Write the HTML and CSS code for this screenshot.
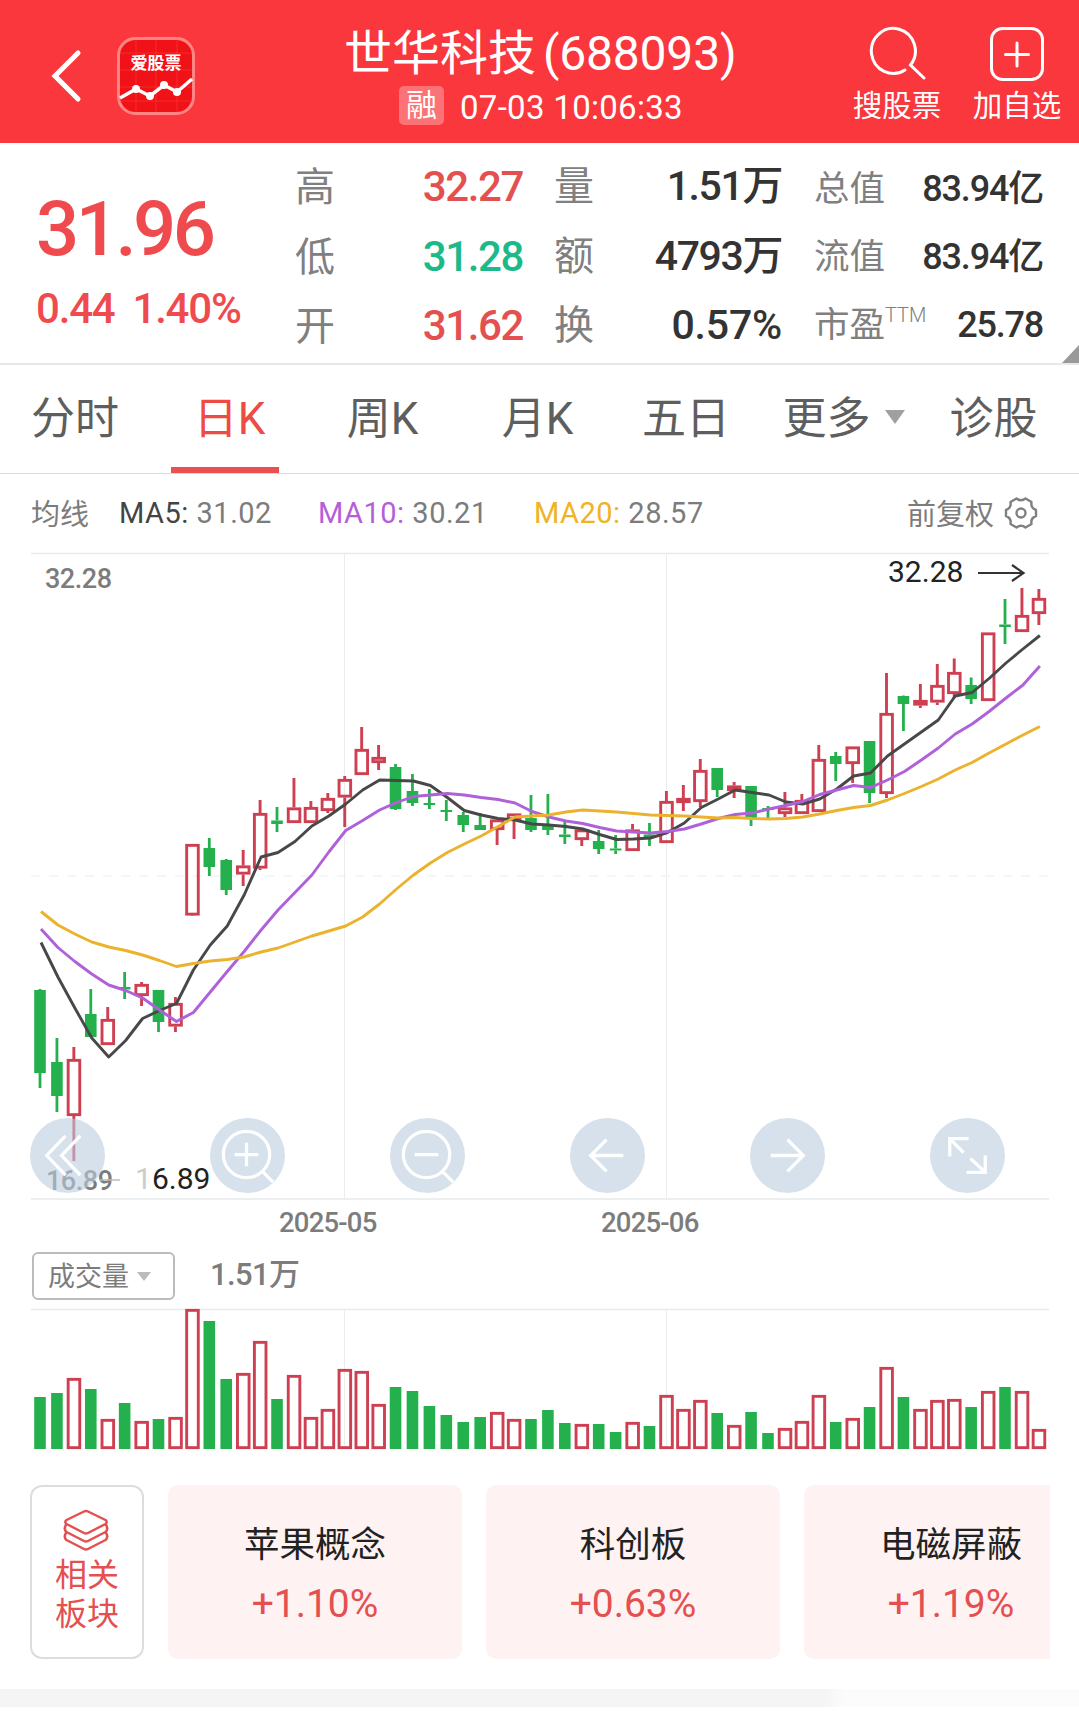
FILE: index.html
```html
<!DOCTYPE html>
<html lang="zh-CN">
<head>
  <meta charset="UTF-8">
  <meta name="viewport" content="width=device-width, initial-scale=1.0">
  <title>世华科技(688093)</title>
  <link rel="stylesheet" href="styles.css">
</head>
<body>
  <header class="header">
    <svg class="back" width="32" height="56" viewBox="0 0 32 56"><path d="M28 5 L5 28 L28 51" fill="none" stroke="#fff" stroke-width="5" stroke-linecap="round"/></svg>
    <svg class="logo" width="78" height="78" viewBox="0 0 78 78">
      <rect x="1.5" y="1.5" width="75" height="75" rx="17" fill="#f01216" stroke="#ff8585" stroke-width="3"/>
      <path d="M3 16H75M3 33H75M3 50H75M3 64H75M19 3V75M39 3V75M60 3V75" stroke="#ff4444" stroke-width="1" opacity=".5"/>
      <text x="39" y="32" text-anchor="middle" class="logo-text">爱股票</text>
      <path d="M3 61 L19 52 L33 59 L47 48 L60 55 L75 42" fill="none" stroke="#fff" stroke-width="3.5"/>
      <g fill="#fff"><circle cx="19" cy="52" r="4"/><circle cx="33" cy="59" r="4"/><circle cx="47" cy="48" r="4"/><circle cx="60" cy="55" r="4"/></g>
    </svg>
    <div class="title">
      <h1>世华科技<span>(688093)</span></h1>
      <div class="subtitle"><span class="badge">融</span><span class="time">07-03 10:06:33</span></div>
    </div>
    <div class="action">
      <svg width="58" height="58" viewBox="0 0 58 58" fill="none" stroke="#fff" stroke-width="3" stroke-linecap="round"><path d="M37 45 A22 22.5 0 1 1 42.500 40 L56 53"/></svg>
      <span>搜股票</span>
    </div>
    <div class="action">
      <svg width="58" height="58" viewBox="0 0 58 58" fill="none" stroke="#fff" stroke-width="3" stroke-linecap="round"><rect x="3.500" y="3.500" width="51" height="51" rx="11"/><path d="M29 18V41M17.500 29.500H40.500"/></svg>
      <span>加自选</span>
    </div>
  </header>

  <section class="quote">
    <div class="price">
      <div class="last">31.96</div>
      <div class="change"><span>0.44</span><span>1.40%</span></div>
    </div>
    <dl class="stats first">
      <div><dt>高</dt><dd class="up">32.27</dd></div>
      <div><dt>低</dt><dd class="down">31.28</dd></div>
      <div><dt>开</dt><dd class="up">31.62</dd></div>
    </dl>
    <dl class="stats second">
      <div><dt>量</dt><dd>1.51万</dd></div>
      <div><dt>额</dt><dd>4793万</dd></div>
      <div><dt>换</dt><dd class="turnover">0.57%</dd></div>
    </dl>
    <dl class="stats third">
      <div><dt>总值</dt><dd>83.94亿</dd></div>
      <div><dt>流值</dt><dd>83.94亿</dd></div>
      <div><dt>市盈<sup>TTM</sup></dt><dd>25.78</dd></div>
    </dl>
    <i class="corner"></i>
  </section>

  <nav class="tabs">
    <a>分时</a>
    <a class="active">日K</a>
    <a>周K</a>
    <a>月K</a>
    <a>五日</a>
    <a>更多<i class="caret"></i></a>
    <a>诊股</a>
  </nav>

  <div class="ma">
    <span class="ma-name">均线</span>
    <span class="ma5"><b>MA5:</b> 31.02</span>
    <span class="ma10"><b>MA10:</b> 30.21</span>
    <span class="ma20"><b>MA20:</b> 28.57</span>
    <span class="adjust">前复权</span>
    <svg width="34" height="34" viewBox="0 0 34 34" fill="none" stroke="#808080" stroke-width="2.4" stroke-linejoin="round">
      <path d="M12.5 2.5 Q17 6 21.5 2.5 L27.5 6 Q26.5 12 32 14 V20 Q26.5 22 27.5 28 L21.5 31.5 Q17 28 12.5 31.5 L6.5 28 Q7.5 22 2 20 V14 Q7.5 12 6.5 6 Z"/>
      <circle cx="17" cy="17" r="4.500"/>
    </svg>
  </div>

  <div class="kline">
    <svg id="kline" width="1079" height="648" viewBox="0 552 1079 648">
      <g class="grid">
        <path d="M31 553.5H1049M31 1199H1049"/>
        <path class="faint" d="M344.500 554V1199M666.500 554V1199"/>
        <path class="faint" d="M31 876H1049" stroke-dasharray="9 9"/>
      </g>
      <text x="45" y="587.500" class="axis" textLength="67">32.28</text>
      <text x="46" y="1190" class="axis" textLength="67">16.89</text>
      <path d="M100 1180H120" class="low-line"/>
      <text x="135" y="1189" class="mark"><tspan class="faded">1</tspan>6.89</text>
      <text x="888" y="581.500" class="mark">32.28</text>
      <path d="M978 573H1023M1012 565L1023.500 573L1012 581" class="high-arrow"/>
      <g id="candles"></g>
    </svg>
    <div class="tools">
      <svg viewBox="0 0 76 76"><path d="M36 18L17 38L36 58M51 18L32 38L51 58"/></svg>
      <svg viewBox="0 0 76 76"><circle cx="37" cy="37" r="23.500"/><path d="M37 25V49M25 37H49M53 54L64 65"/></svg>
      <svg viewBox="0 0 76 76"><circle cx="37" cy="37" r="23.500"/><path d="M25 37H49M53 54L64 65"/></svg>
      <svg viewBox="0 0 76 76"><path d="M54 38H21M37 22L21 38L37 54"/></svg>
      <svg viewBox="0 0 76 76"><path d="M21 38H54M38 22L54 38L38 54"/></svg>
      <svg viewBox="0 0 76 76"><path d="M20 39V21H39M20 21L34 35M56 38V55H37M56 55L41 41"/></svg>
    </div>
  </div>

  <div class="dates"><span>2025-05</span><span>2025-06</span></div>

  <div class="volume-bar">
    <div class="select">成交量<i class="caret"></i></div>
    <span>1.51万</span>
  </div>
  <svg id="volume" class="volume" width="1079" height="142" viewBox="0 1308 1079 142">
    <g class="grid">
      <path d="M31 1309.500H1049"/>
      <path class="faint" d="M344.500 1310V1449M666.500 1310V1449"/>
    </g>
    <g id="bars"></g>
  </svg>

  <div class="sectors">
    <div class="related">
      <svg width="46" height="42" viewBox="0 0 46 42" fill="none" stroke="#e4504f" stroke-width="2.500" stroke-linejoin="round"><path d="M21 2.500Q23 1.500 25 2.500L42.500 11Q45 13 42.500 15L25 24Q23 25 21 24L3.500 15Q1 13 3.500 11Z"/><path d="M3.500 15Q0 20 3.500 23L21 32Q23 33 25 32L42.500 23Q46 20 42.500 15M3.500 23Q0 28 3.500 31L21 40Q23 41 25 40L42.500 31Q46 28 42.500 23"/></svg>
      <span>相关</span>
      <span>板块</span>
    </div>
    <div class="cards">
      <div class="card"><h2>苹果概念</h2><p>+1.10%</p></div>
      <div class="card"><h2>科创板</h2><p>+0.63%</p></div>
      <div class="card"><h2>电磁屏蔽</h2><p>+1.19%</p></div>
    </div>
  </div>
  <div class="divider"></div>

  <script src="chart.js"></script>
</body>
</html>
```
FILE: styles.css
```css
* {
  box-sizing: border-box;
}

body {
  margin: 0;
  width: 1079px;
  height: 1716px;
  overflow: hidden;
  background-color: #fff;
  color: #333;
  font-family: Roboto, "Noto Sans CJK SC", sans-serif;
}

svg {
  display: block;
  flex: none;
}

h1, h2, p, dl, dd {
  margin: 0;
  font-weight: 400;
}

/* Header */
.header {
  display: flex;
  height: 143px;
  background-color: #fa373c;
  color: #fff;
}

.back {
  margin: 48px 0 0 50px;
}

.logo {
  margin: 37px 0 0 35px;
}

.logo-text {
  fill: #fff;
  font-size: 17px;
  font-weight: 700;
}

.title {
  width: 400px;
  margin: 20px 0 0 145px;
}

.title h1 {
  height: 66px;
  font-size: 48px;
  line-height: 68px;
  white-space: nowrap;
  padding-left: 4px;
}

.title h1 span {
  margin-left: 7px;
  letter-spacing: -0.2px;
}

.subtitle {
  display: flex;
  align-items: center;
  height: 39px;
  padding-left: 59px;
}

.badge {
  width: 45px;
  height: 39px;
  border-radius: 5px;
  background-color: rgba(255, 255, 255, 0.3);
  font-size: 31px;
  line-height: 39px;
  text-align: center;
}

.time {
  margin-left: 16px;
  font-size: 33px;
  letter-spacing: 0.3px;
  padding-top: 3px;
}

.action {
  display: flex;
  flex-direction: column;
  align-items: center;
  width: 90px;
  margin: 25px 0 0 112px;
}

.action + .action {
  margin-left: 30px;
}

.action span {
  font-size: 29.5px;
  line-height: 42px;
  margin-top: 2px;
  white-space: nowrap;
}

/* Quote */
.quote {
  position: relative;
  display: flex;
  height: 222px;
  border-bottom: 2px solid #e8e8e8;
}

.price {
  width: 295px;
  padding-left: 36px;
  color: #ef4b4e;
  font-weight: 500;
}

.last {
  margin-top: 41px;
  font-size: 76px;
  line-height: 90px;
  letter-spacing: -3.5px;
}

.change {
  display: flex;
  gap: 18px;
  margin-top: 10px;
  font-size: 42px;
  line-height: 50px;
  letter-spacing: -1.2px;
}

.stats {
  padding-top: 9px;
}

.stats div {
  display: flex;
  justify-content: space-between;
  align-items: baseline;
  height: 69.5px;
  line-height: 69px;
  white-space: nowrap;
}

.stats dt {
  color: #808080;
  font-size: 40px;
}

.stats dd {
  font-size: 42px;
  font-weight: 500;
  letter-spacing: -1.4px;
}

.stats .up {
  color: #e4504f;
}

.stats .down {
  color: #1cb98a;
}

.first {
  width: 228px;
}

.second {
  width: 228px;
  margin-left: 31px;
}

.second dd {
  font-size: 41px;
}

.second .turnover {
  letter-spacing: -0.2px;
}

.third {
  width: 229px;
  margin-left: 32px;
  padding-top: 12px;
}

.third div {
  height: 68px;
}

.third dt {
  font-size: 35.5px;
}

.third dd {
  font-size: 36px;
  letter-spacing: -1.2px;
}

.third sup {
  font-size: 20px;
  font-weight: 300;
  line-height: 0;
  vertical-align: 15px;
}

.corner {
  position: absolute;
  right: 0;
  bottom: 0;
  border-left: 17px solid transparent;
  border-bottom: 18px solid #999;
}

/* Tabs */
.tabs {
  display: grid;
  grid-template-columns: 150px 150px 165px 145px 152px 163px 137px;
  height: 109px;
  border-bottom: 1px solid #d8dcdc;
  color: #5e5e5e;
  font-size: 44px;
  line-height: 106px;
}

.tabs a {
  display: flex;
  justify-content: center;
  align-items: center;
}

.tabs .active {
  color: #ef4b45;
  justify-self: end;
  width: 129px;
  height: 108px;
  padding-right: 12px;
  background: linear-gradient(#ea5052, #ea5052) 0 bottom / 108px 6px no-repeat;
}

.caret {
  border: 10px solid transparent;
  border-top: 14px solid #a0a0a0;
  border-bottom: 0;
  margin-left: 14px;
}

.tabs .caret {
  margin-top: -4px;
}

/* Moving averages */
.ma {
  display: flex;
  align-items: center;
  height: 78px;
  padding: 0 41px 0 31px;
  color: #7c7c7c;
  font-size: 29px;
  letter-spacing: 0.5px;
}

.ma b {
  font-weight: 400;
}

.ma-name,
.adjust {
  letter-spacing: 0;
  margin-top: -2px;
}

.ma5 {
  width: 199px;
  margin-left: 30px;
}

.ma10 {
  width: 216px;
}

.ma5 b {
  color: #444;
}

.ma10 b {
  color: #b45fd9;
}

.ma20 b {
  color: #f0b323;
}

.adjust {
  margin: -2px 10px 0 auto;
}

/* Candlestick chart */
.kline {
  position: relative;
}

.grid path {
  fill: none;
  stroke: #e6eaec;
  stroke-width: 1.5;
}

.grid .faint {
  stroke: #ededed;
  stroke-width: 1;
}

.axis {
  fill: #7c7c7c;
  font-size: 27px;
  font-weight: 500;
}

.mark {
  fill: #222;
  font-size: 30px;
}

.faded {
  fill: #ccc;
}

.low-line {
  stroke: #bbb;
  stroke-width: 1.5;
}

.high-arrow {
  fill: none;
  stroke: #333;
  stroke-width: 2.2;
}

.up-mark {
  fill: none;
  stroke: #ce3f52;
  stroke-width: 2.9;
}

.down-mark {
  fill: #24b14d;
  stroke: #24b14d;
  stroke-width: 2.8;
}

.down-body {
  fill: #24b14d;
}

.line {
  fill: none;
  stroke-width: 2.9;
  stroke-linejoin: round;
}

.line5 {
  stroke: #484848;
}

.line10 {
  stroke: #b060d8;
}

.line20 {
  stroke: #ebb22e;
}

/* Buttons over the chart */
.tools {
  position: absolute;
  left: 30px;
  bottom: 7px;
  display: flex;
  gap: 105px;
}

.tools svg {
  width: 75px;
  height: 75px;
  border-radius: 50%;
  background-color: rgba(186, 205, 224, 0.6);
  fill: none;
  stroke: #fff;
  stroke-width: 3.3;
}

.dates {
  display: flex;
  gap: 226px;
  height: 52px;
  padding-left: 279px;
  color: #7c7c7c;
  font-size: 27.5px;
  font-weight: 500;
  letter-spacing: -0.8px;
  line-height: 45px;
}

.dates span {
  width: 96px;
  white-space: nowrap;
}

/* Volume */
.volume-bar {
  display: flex;
  height: 56px;
  padding-left: 32px;
  color: #7c7c7c;
}

.select {
  display: flex;
  align-items: center;
  width: 143px;
  height: 48px;
  padding: 0 0 3px 14px;
  border: 2px solid #bcbcbc;
  border-radius: 6px;
  font-size: 27px;
}

.select .caret {
  margin: 3px 0 0 8px;
  border-width: 9px 7.5px 0;
  border-top-color: #bbb;
}

.volume-bar span {
  margin-left: 35px;
  font-size: 31px;
  line-height: 46px;
  font-weight: 500;
  letter-spacing: -0.6px;
}

/* Sectors */
.sectors {
  display: flex;
  gap: 24px;
  margin-top: 35px;
  padding: 0 29px 0 30px;
}

.related {
  flex: none;
  display: flex;
  flex-direction: column;
  align-items: center;
  width: 114px;
  height: 174px;
  padding-top: 22px;
  border: 2px solid #ddd;
  border-radius: 12px;
  color: #e4504f;
  font-size: 32px;
  line-height: 39px;
}

.related svg {
  margin: 0 3px 5px 0;
}

.cards {
  flex: 1;
  display: flex;
  gap: 24px;
  overflow: hidden;
}

.card {
  flex: none;
  width: 294px;
  height: 174px;
  padding-top: 35px;
  border-radius: 10px;
  background-color: #fef2f2;
  text-align: center;
}

.card h2 {
  color: #222;
  font-size: 35.5px;
  line-height: 50px;
}

.card p {
  margin-top: 8px;
  color: #e4504f;
  font-size: 39px;
  line-height: 52px;
}

.divider {
  height: 18px;
  margin-top: 30px;
  background: linear-gradient(to right, #f5f5f5 825px, #fcfcfc 845px);
}
```
FILE: chart.js
```js
// Each day: [up, high, body top, body bottom, low, volume top]
const days = [
  [0, 989, 990, 1073, 1088, 1397], [0, 1038, 1062, 1096, 1112, 1393], [1, 1047, 1059, 1116, 1161, 1378],
  [0, 989, 1014, 1037, 1037, 1389], [1, 1007, 1019, 1045, 1045, 1419], [0, 972, 987, 989.5, 999, 1403],
  [1, 982, 984, 996, 1006, 1421], [0, 990, 990, 1022, 1032, 1419], [1, 997, 1003, 1026.5, 1032, 1417],
  [1, 844, 844, 915.5, 915, 1309], [0, 838, 848, 867, 876, 1321], [0, 859, 860, 890, 895, 1379],
  [1, 850, 865.5, 874.5, 886, 1373], [1, 800, 813, 868.5, 870, 1341], [0, 807, 820.5, 824, 832, 1399],
  [1, 778, 807.5, 823, 823, 1375], [1, 801, 807, 823, 823, 1417], [1, 793, 798, 811, 813, 1409],
  [1, 776, 779, 797.5, 827, 1369], [1, 727, 749, 775, 775, 1371], [1, 745, 757, 763, 770, 1404],
  [0, 764, 767, 809, 810, 1387], [0, 774, 791, 803, 806, 1391], [0, 789, 803, 805, 809, 1406],
  [0, 800, 810, 812, 821, 1415], [0, 812, 815, 825, 832, 1422], [0, 813, 825, 830, 830, 1417],
  [1, 819.5, 819.5, 830, 845, 1412], [1, 813.5, 813.5, 820, 839, 1419], [0, 795, 818, 830, 832, 1419],
  [0, 794, 825, 830, 835, 1410], [0, 820, 834.5, 837, 844, 1423], [1, 829.5, 829.5, 840, 846, 1424],
  [0, 830, 841, 849, 854, 1424], [0, 835, 848.5, 850.5, 854, 1432], [1, 824, 829.5, 851, 851, 1422],
  [0, 823, 834.5, 837, 846, 1426], [1, 791, 801, 843, 843, 1395], [1, 785, 798, 803, 811, 1409],
  [1, 759, 770, 802, 807, 1400], [0, 768, 768, 790, 797, 1413], [1, 782, 785.5, 791, 798, 1425],
  [0, 786, 786, 818, 826, 1412], [0, 806, 808, 810, 818, 1433], [1, 792, 807.5, 814, 817, 1428],
  [1, 794, 800, 814, 814, 1421], [1, 745, 759, 812, 812, 1395], [0, 752, 756, 764, 781, 1422],
  [1, 746.5, 746.5, 764, 783, 1418], [0, 741, 741, 793, 803, 1407], [1, 673, 713, 794, 798, 1367],
  [0, 695.5, 696, 704, 731, 1397], [1, 684, 700, 705.5, 708, 1409], [1, 664, 685, 702.5, 705, 1400],
  [1, 658.5, 672, 694, 698, 1399], [0, 677.5, 685, 699, 704, 1407], [1, 632.5, 632.5, 701, 701, 1391],
  [0, 599, 624.5, 627, 644, 1387], [1, 588, 615, 632, 632, 1391], [1, 589, 598, 614, 625, 1429]
];

const averages = {
  line5: [942.5, 977, 1008, 1038, 1057, 1040.5, 1018.5, 1010.5, 1003.5, 970, 945, 926, 895, 857, 852.5, 841.5, 826, 816, 804, 790,
    780, 780.5, 781, 785.5, 797.5, 810.5, 815, 818.5, 820, 824, 825, 826.5, 829, 834.5, 839.5, 839, 838, 832.5, 823, 807.5,
    799, 790, 792.5, 795, 802, 804, 799, 789, 776, 773, 756, 744, 732, 720, 696, 692.5, 678.5, 663, 649, 635.5],
  line10: [929, 947.5, 961.5, 974, 985, 990.5, 998, 1010, 1021.5, 1012.5, 992, 971.5, 951.5, 930, 910, 892.5, 875, 852, 830.5, 820.5,
    810, 802.5, 796.5, 795, 793.5, 795, 797.5, 799.5, 803, 811.5, 817, 821, 823.5, 827.5, 831, 832, 833, 831.5, 829, 824,
    818.5, 814.5, 813, 809, 805.5, 801.5, 794.5, 790, 785.5, 787.5, 780, 771.5, 760, 748, 734, 724, 711.5, 698, 685, 666],
  line20: [911.5, 925, 934, 942, 947, 950.5, 955, 960.5, 966.5, 963.5, 961, 959.5, 957, 952, 948, 942, 936, 931, 926, 917,
    904, 889, 875, 863, 852.5, 844, 836, 826.5, 817, 816, 815, 812, 810, 811, 812, 813.5, 815, 815.5, 816, 817,
    818, 817.5, 818.5, 819, 818.5, 817, 814, 810.5, 807.5, 805.5, 800, 793.5, 786.5, 779, 770, 762.5, 753, 744, 735, 726.5]
};

const step = 16.93;
const bottom = 1449;

function dayX(i) {
  return 40 + i * step;
}

// Rising days are hollow, falling days are filled
function box(x, top, base, up) {
  if (up) {
    const height = Math.max(base - top - 2.7, 1);
    return `<rect class="up-mark" x="${x - 5.7}" y="${top + 1.35}" width="11.6" height="${height}"/>`;
  }
  return `<rect class="down-body" x="${x - 5.8}" y="${top}" width="11.6" height="${base - top}"/>`;
}

let candles = '';
let bars = '';
days.forEach(([up, high, top, base, low, volume], i) => {
  const x = dayX(i);
  candles += `<path class="${up ? 'up-mark' : 'down-mark'}" d="M${x} ${high}V${top}M${x} ${base}V${low}"/>`;
  candles += box(x, top, base, up);
  bars += box(x, volume, bottom, up);
});

for (const name in averages) {
  const points = averages[name].map((y, i) => `${dayX(i) + 1},${y}`).join(' ');
  candles += `<polyline class="line ${name}" points="${points}"/>`;
}

document.getElementById('candles').innerHTML = candles;
document.getElementById('bars').innerHTML = bars;
```
